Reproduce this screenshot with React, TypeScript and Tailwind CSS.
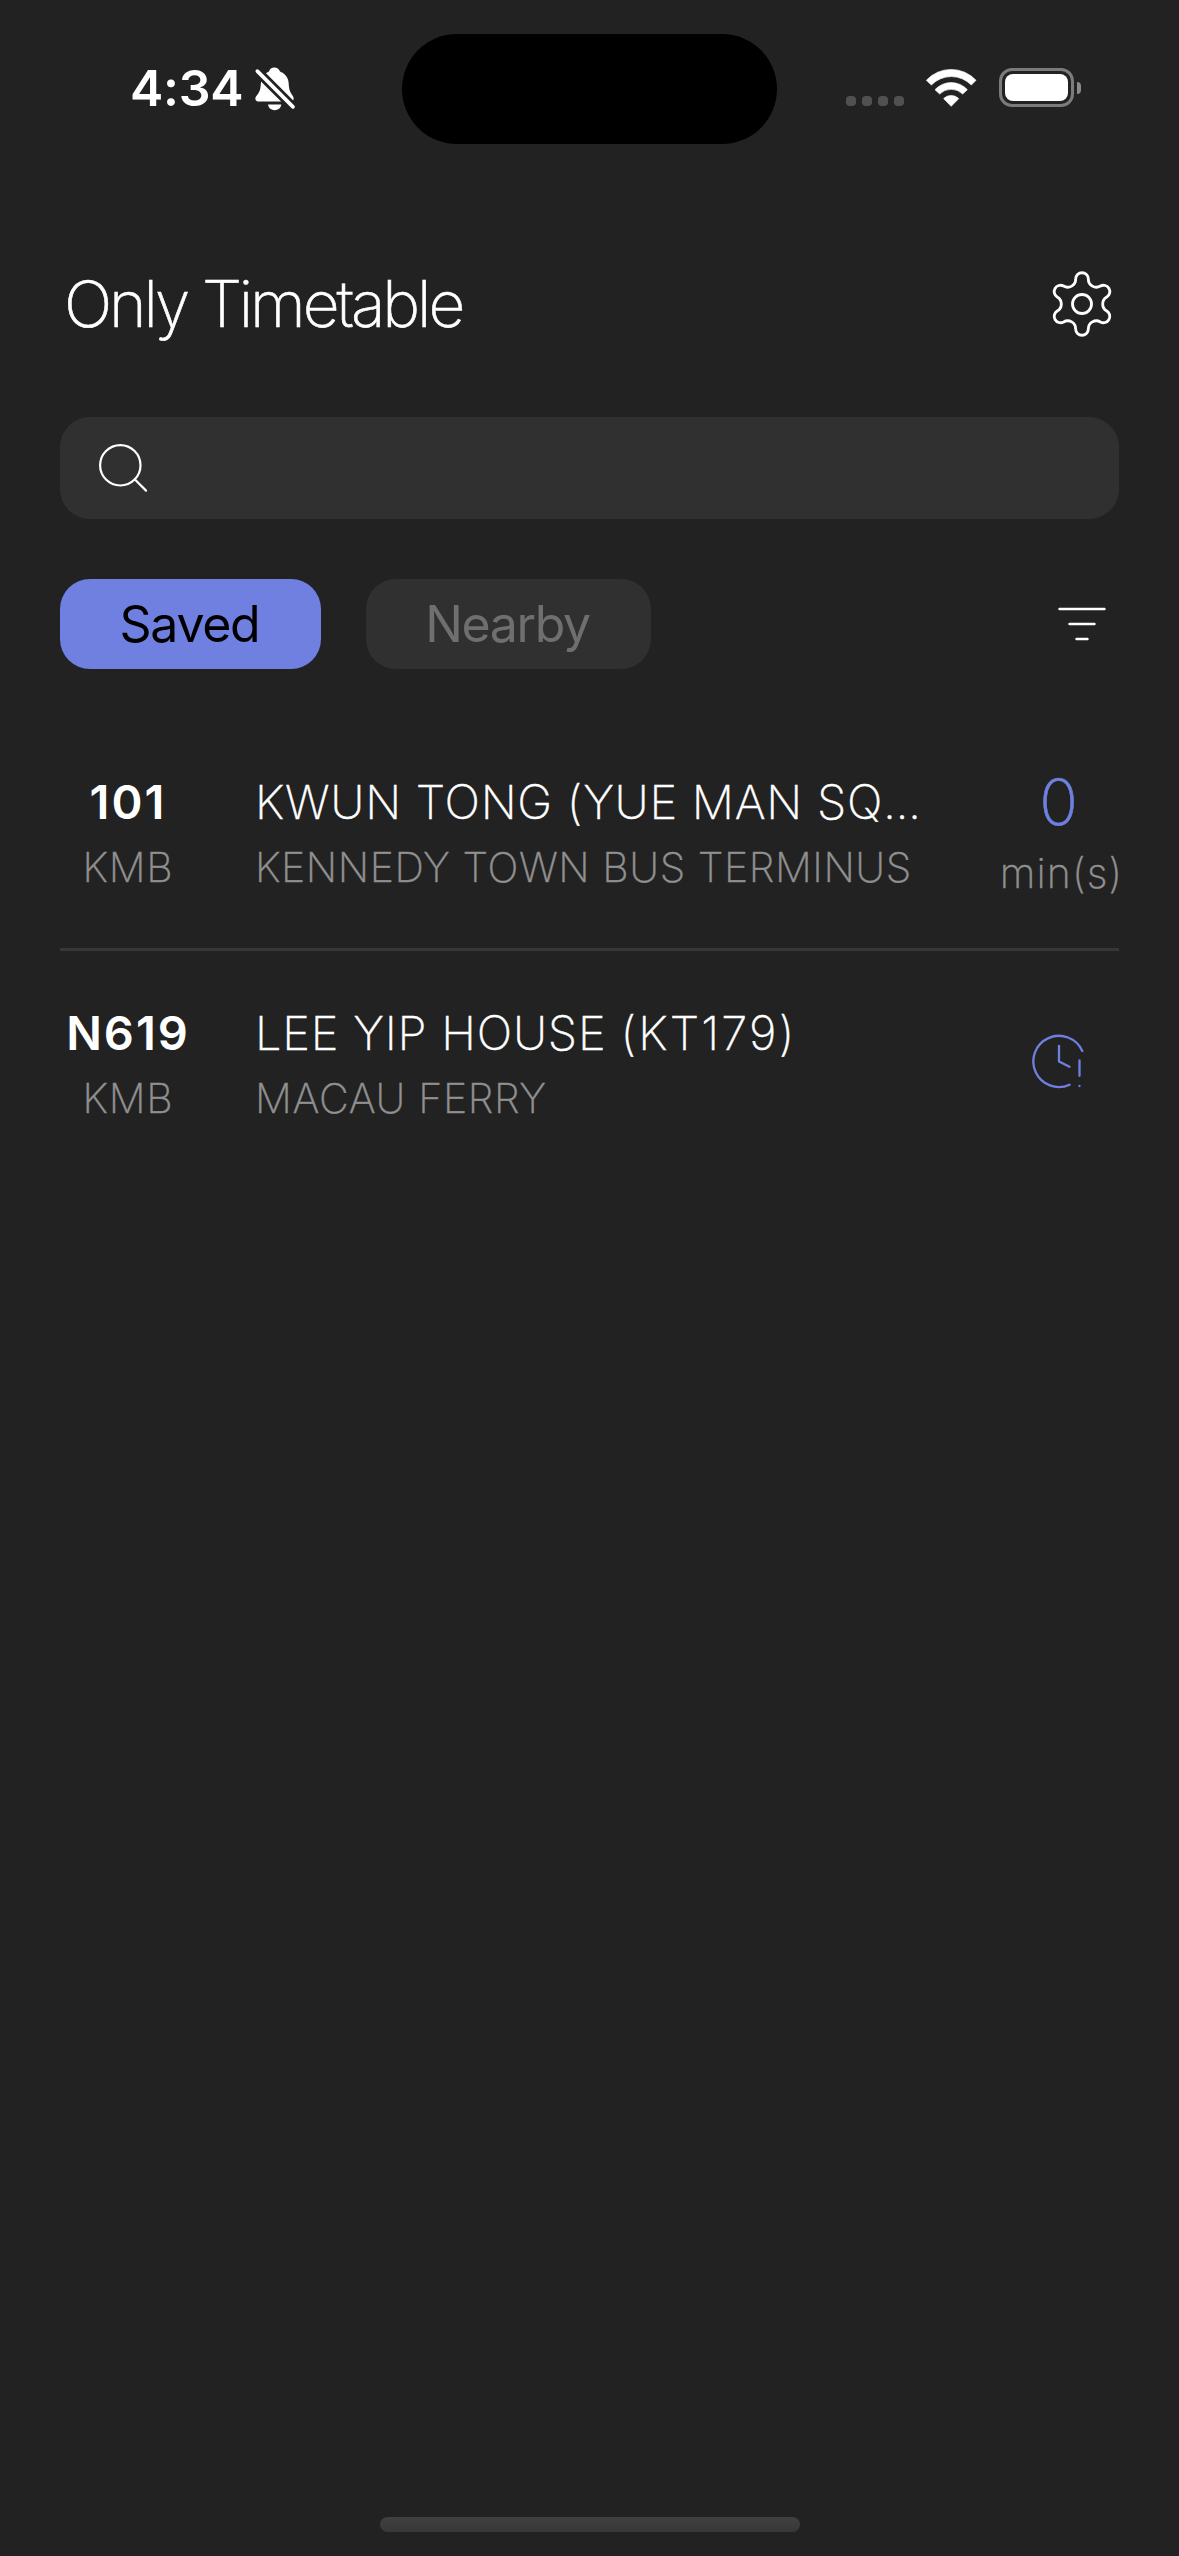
import React from "react";

function BellSlashIcon() {
  return (
    <svg className="h-[44px] w-[42px]" viewBox="463 139.5 126 132" fill="#fff">
      <path d="M478 243C466 243 464 232 472 224C484 210 482 200 484 186C486 166 497 158 508 153C510 145 516 141 524 141C532 141 538 145 541 153C553 158 566 168 567 188C568 205 570 212 578 224C584 232 584 243 572 243Z" />
      <path d="M505 252H545C543 263 535 269 525 269S507 263 505 252Z" />
      <path d="M455 134L598 277" stroke="#222" strokeWidth="28" />
      <path d="M473 152L580 259" stroke="#fff" strokeWidth="11" strokeLinecap="round" />
    </svg>
  );
}

function WifiIcon() {
  return (
    <svg className="h-[38px] w-[52px]" viewBox="316 85 156 114" fill="#fff" stroke="#fff" strokeWidth="2" strokeLinejoin="round">
      <path d="M320 119A101 101 0 0 1 469 119L455 133A84 84 0 0 0 335 133Z" />
      <path d="M346 147A66 66 0 0 1 443 147L429 160A49 49 0 0 0 360 160Z" />
      <path d="M372 174A31 31 0 0 1 417 174L394.500 197Z" />
    </svg>
  );
}

function Battery() {
  return (
    <div className="flex items-center gap-[3px]">
      <div className="h-[39px] w-[75px] rounded-[13px] border-3 border-[#7b7b7b] p-[3px]">
        <div className="h-full w-full rounded-[8px] bg-white" />
      </div>
      <div className="h-3 w-1 rounded-r-full bg-[#8a8a8a]" />
    </div>
  );
}

function StatusBar() {
  return (
    <div className="mt-[34px] flex h-[110px] shrink-0 items-center pl-[130px] pr-[98px] text-white">
      <div className="-mt-[3px] w-[124px] text-[50px] leading-[60px] font-semibold tracking-[-0.28px]">4:34</div>
      <BellSlashIcon />
      <div className="ml-[106px] h-full w-[375px] rounded-full bg-black" />
      <div className="-mt-[3px] ml-auto flex items-center">
        <div className="mt-[27px] mr-[21px] flex gap-[6px]">
          {[0, 1, 2, 3].map((i) => (
            <span key={i} className="size-[10px] rounded-[4px] bg-[#515151]" />
          ))}
        </div>
        <WifiIcon />
        <div className="ml-[22px]">
          <Battery />
        </div>
      </div>
    </div>
  );
}

function GearIcon() {
  const rotate = (x: number, y: number, k: number) => {
    const a = (k * Math.PI) / 3;
    return `${(x * Math.cos(a) - y * Math.sin(a)).toFixed(2)} ${(x * Math.sin(a) + y * Math.cos(a)).toFixed(2)}`;
  };
  const outline = [0, 1, 2, 3, 4, 5]
    .map((k) => `A19 19 0 0 1 ${rotate(19, -74.8, k)}A24 24 0 0 0 ${rotate(-19, -74.8, k + 1)}`)
    .join("");
  return (
    <svg className="size-[66px]" viewBox="-99 -99 198 198" fill="none" stroke="#fff" strokeWidth="8.5">
      <path d={`M-19 -74.8${outline}Z`} />
      <circle r="28.500" />
    </svg>
  );
}

function SearchIcon() {
  return (
    <svg className="size-[50px]" viewBox="0 0 50 50" fill="none" stroke="#fff" strokeWidth="2.2" strokeLinecap="round">
      <circle cx="22.300" cy="22.300" r="20.200" />
      <path d="M36.700 36.300L48 47.600" />
    </svg>
  );
}

function FilterIcon() {
  return (
    <svg className="h-[36px] w-[50px]" viewBox="0 0 50 36" stroke="#fff" strokeWidth="2.4" strokeLinecap="round">
      <path d="M2.500 3H47.500M12.500 18H37.500M19.500 33H30.500" />
    </svg>
  );
}

function ClockAlertIcon() {
  return (
    <svg className="size-[60px]" viewBox="0 0 60 60" fill="none" stroke="#7080e0" strokeWidth="2.3" strokeLinecap="round" strokeLinejoin="round">
      <path d="M53.300 20A25.600 25.600 0 1 0 40.600 53.700" />
      <path d="M30 14.800V30.500L40.500 35.800M50.500 29.300V44.800M50.500 54.800V55" />
    </svg>
  );
}

interface RouteProps {
  code: React.ReactNode;
  title: React.ReactNode;
  subtitle: React.ReactNode;
  children: React.ReactNode;
}

function RouteRow({ code, title, subtitle, children }: RouteProps) {
  return (
    <div className="flex h-[228px] items-center whitespace-nowrap">
      <div className="flex w-[136px] flex-col items-center gap-3 pb-[3px]">
        <div className="text-[47px] leading-[57px] font-semibold tracking-[2px] text-white">{code}</div>
        <div className="text-[41px] leading-[50px] font-extralight tracking-[0.7px] text-[#909090] [-webkit-text-stroke:0.4px]">KMB</div>
      </div>
      <div className="ml-[59px] flex flex-1 flex-col gap-3 pb-[3px]">
        <div className="text-[47px] leading-[57px] font-extralight text-white [-webkit-text-stroke:0.4px]">{title}</div>
        <div className="text-[41px] leading-[50px] font-extralight text-[#909090] [-webkit-text-stroke:0.4px]">{subtitle}</div>
      </div>
      <div className="-mr-px flex w-[120px] flex-col items-center">{children}</div>
    </div>
  );
}

export default function App() {
  return (
    <div className="flex h-[2556px] w-[1179px] flex-col overflow-hidden bg-[#222222] font-['Inter',sans-serif]">
      <StatusBar />
      <header className="mt-[126px] flex h-[67px] items-center justify-between pr-[64px] pl-16">
        <h1 className="text-[64px] leading-[66px] font-extralight tracking-[-3.1px] text-white [-webkit-text-stroke:0.6px]">
          Only Timetable
        </h1>
        <GearIcon />
      </header>
      <main className="px-[60px]">
        <div className="mt-20 flex h-[102px] items-center rounded-[30px] bg-[#303030] pl-[38px]">
          <SearchIcon />
        </div>
        <nav className="mt-[60px] flex h-[90px] items-center">
          <button className="h-full w-[261px] rounded-[30px] bg-[#7080e0] pr-[2px] text-[50px] leading-[60px] tracking-[-1.3px] text-black">
            Saved
          </button>
          <button className="ml-[45px] h-full w-[285px] rounded-[30px] bg-[#303030] pr-[2px] text-[50px] leading-[60px] tracking-[-1.35px] text-[#6f6f6f]">
            Nearby
          </button>
          <div className="mr-[12px] ml-auto">
            <FilterIcon />
          </div>
        </nav>
        <section className="mt-[51px]">
          <RouteRow
            code="101"
            title={<span className="tracking-[0.72px]">KWUN TONG (YUE MAN SQ<span className="tracking-[-0.5px]">...</span></span>}
            subtitle={<span className="tracking-[0.56px]">KENNEDY TOWN BUS TERMINUS</span>}
          >
            <div className="pr-[3px] text-[64px] leading-[64px] font-extralight text-[#7080e0] [-webkit-text-stroke:0.6px]">0</div>
            <div className="mt-[14px] pl-[3px] text-[41px] leading-[50px] font-extralight tracking-[1.1px] text-[#909090] [-webkit-text-stroke:0.4px]">
              min(s)
            </div>
          </RouteRow>
          <div className="h-[3px] bg-[#373737]" />
          <RouteRow
            code="N619"
            title={<span className="tracking-[0.78px]">LEE YIP HOUSE <span className="tracking-[2.2px]">(KT179)</span></span>}
            subtitle={<span className="tracking-[0.65px]">MACAU FERRY</span>}
          >
            <div className="-mt-2 -ml-0.5">
              <ClockAlertIcon />
            </div>
          </RouteRow>
        </section>
      </main>
      <div className="mt-auto mb-6 ml-[380px] h-[15px] w-[420px] shrink-0 rounded-full bg-linear-to-b from-[#404040] to-[#383838]" />
    </div>
  );
}
